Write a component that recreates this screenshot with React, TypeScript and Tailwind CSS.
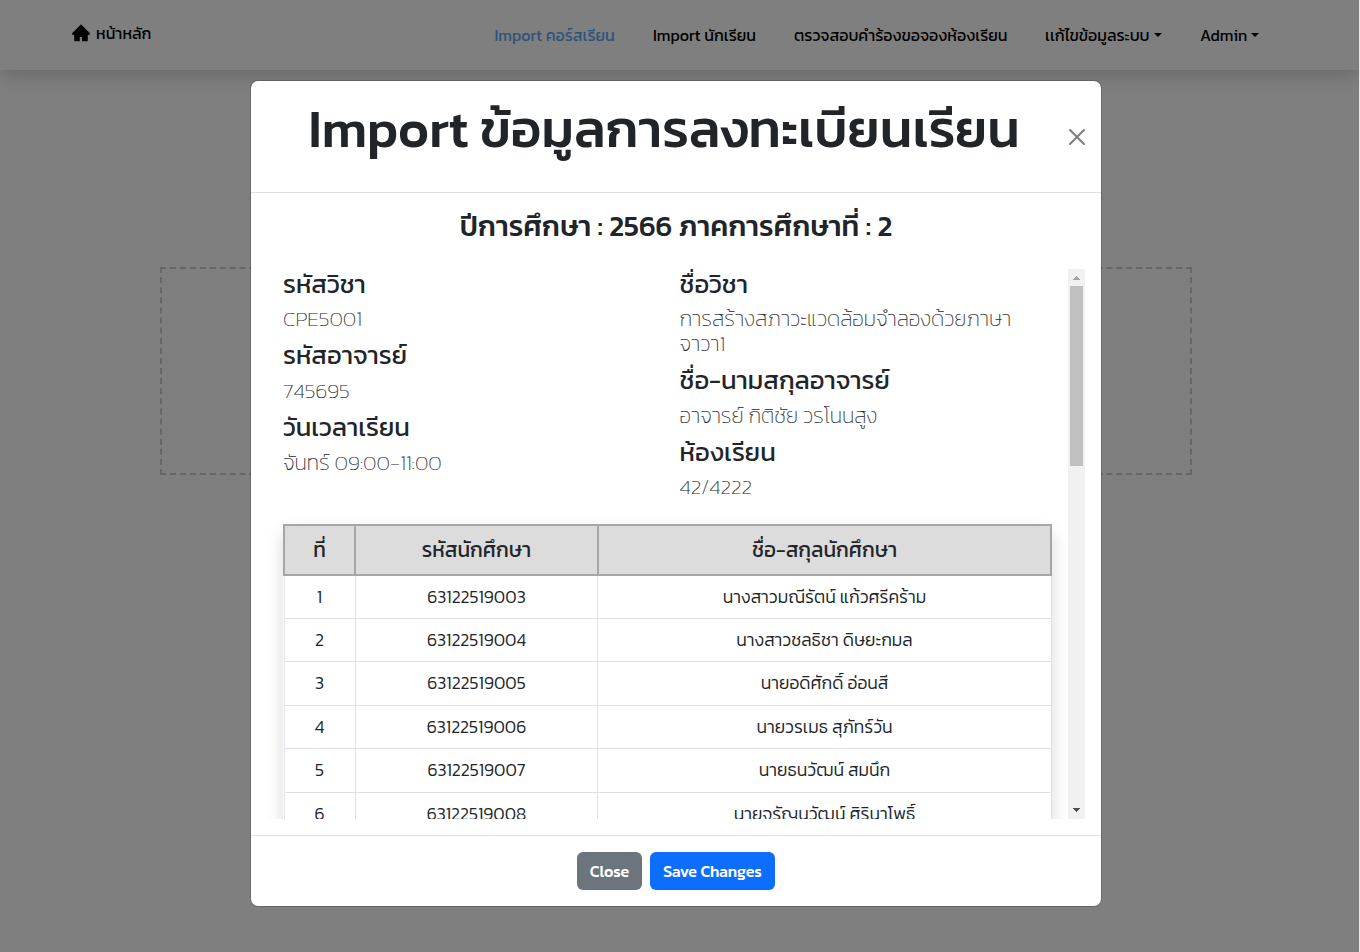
import { AiFillHome } from "react-icons/ai";

function Caret() {
  return <span className="ml-[5px] h-0 w-0 border-x-[4.5px] border-t-[4.5px] border-x-transparent border-t-black" />;
}

function Navbar() {
  return (
    <nav className="flex h-[70px] items-center bg-white pr-[100px] pl-[71px] text-base whitespace-nowrap text-black shadow-[0_8px_16px_rgba(0,0,0,0.15)]">
      <a className="mb-[3px] flex items-center">
        <AiFillHome className="mr-[5px] mb-px h-5 w-5" />
        <span className="mb-[2px]">หน้าหลัก</span>
      </a>
      <div className="ml-auto flex items-center gap-[38px]">
        <span className="w-[120.5px] text-[#5ba6f8]">Import คอร์สเรียน</span>
        <span className="w-[103px]">Import นักเรียน</span>
        <span className="w-[213px]">ตรวจสอบคำร้องขอจองห้องเรียน</span>
        <div className="flex items-center">
          <span className="w-[104px]">เเก้ไขข้อมูลระบบ</span>
          <Caret />
        </div>
        <div className="flex items-center">
          <span className="w-[46px]">Admin</span>
          <Caret />
        </div>
      </div>
    </nav>
  );
}

type Item = { label: string; value: string };

const leftItems: Item[] = [
  { label: "รหัสวิชา", value: "CPE5001" },
  { label: "รหัสอาจารย์", value: "745695" },
  { label: "วันเวลาเรียน", value: "จันทร์ 09:00-11:00" },
];

const rightItems: Item[] = [
  { label: "ชื่อวิชา", value: "การสร้างสภาวะแวดล้อมจำลองด้วยภาษา\nจาวา1" },
  { label: "ชื่อ-นามสกุลอาจารย์", value: "อาจารย์ กิติชัย วรโนนสูง" },
  { label: "ห้องเรียน", value: "42/4222" },
];

function Details({ items }: { items: Item[] }) {
  return (
    <div className="-mt-[0.3px] flex flex-col">
      {items.map((item) => (
        <div key={item.label} className="mb-[8.2px] text-[#212529]">
          <div className="mb-[7.8px] text-[25.6px] leading-[30.72px]">{item.label}</div>
          <div className="text-[21.25px] leading-[24.96px] font-extralight whitespace-pre text-[#212529] [-webkit-text-stroke:0.2px_#212529]">
            {item.value}
          </div>
        </div>
      ))}
    </div>
  );
}

const students = [
  { id: "63122519003", name: "นางสาวมณีรัตน์ แก้วศรีคร้าม", height: "h-[43px]" },
  { id: "63122519004", name: "นางสาวชลธิชา ดิษยะกมล", height: "h-[43px]" },
  { id: "63122519005", name: "นายอดิศักดิ์ อ่อนสี", height: "h-[44px]" },
  { id: "63122519006", name: "นายวรเมธ สุภัทร์วัน", height: "h-[43px]" },
  { id: "63122519007", name: "นายธนวัฒน์ สมนึก", height: "h-[44px]" },
  { id: "63122519008", name: "นายจรัญนวัฒน์ ศิรินาโพธิ์", height: "h-[43px]" },
];

function StudentTable() {
  return (
    <div className="mt-[15.3px] w-[769px] text-[#212529] shadow-[0_8px_16px_rgba(0,0,0,0.15)]">
      <div className="flex h-[52px] border-2 border-[#a6a6a6] bg-[#dcdcdc] text-[20.8px]">
        <div className="flex w-[71px] items-center justify-center border-r-2 border-[#a6a6a6]">ที่</div>
        <div className="flex w-[243px] items-center justify-center border-r-2 border-[#a6a6a6]">รหัสนักศึกษา</div>
        <div className="flex grow items-center justify-center">ชื่อ-สกุลนักศึกษา</div>
      </div>
      <div className="ml-px border-l border-[#dee2e6] bg-white text-[17.6px] font-light">
        {students.map((s, i) => (
          <div key={s.id} className={`flex border-b border-[#dee2e6] ${s.height}`}>
            <div className="flex w-[71px] items-center justify-center border-r border-[#dee2e6] pr-px">{i + 1}</div>
            <div className="flex w-[242px] items-center justify-center border-r border-[#dee2e6]">{s.id}</div>
            <div className="flex grow items-center justify-center border-r border-[#dee2e6]">{s.name}</div>
          </div>
        ))}
      </div>
    </div>
  );
}

function ScrollBar() {
  return (
    <div className="flex w-[17px] shrink-0 flex-col items-center bg-[#f1f1f1]">
      <svg viewBox="0 0 17 17" className="h-[17px] w-[17px]" shapeRendering="crispEdges">
        <path d="M8 7h1v1h1v1h1v1h1v1H5v-1h1v-1h1v-1h1z" fill="#a3a3a3" />
      </svg>
      <div className="h-[180px] w-[13px] bg-[#c1c1c1]" />
      <svg viewBox="0 0 17 17" className="mt-auto h-[17px] w-[17px]" shapeRendering="crispEdges">
        <path d="M5 6h7v1h-1v1h-1v1H9v1H8V9H7V8H6V7H5z" fill="#505050" />
      </svg>
    </div>
  );
}

function Modal() {
  return (
    <div className="flex h-[827px] w-[852px] flex-col overflow-hidden rounded-lg border border-black/[0.175] bg-white bg-clip-padding">
      <div className="flex h-[112px] shrink-0 items-center border-b border-[#dee2e6] pr-4 pl-[57.5px]">
        <h1 className="mb-[16px] text-[52.8px] leading-[64px] font-medium whitespace-nowrap text-[#212529]">
          Import ข้อมูลการลงทะเบียนเรียน
        </h1>
        <svg viewBox="0 0 16 16" className="ml-auto h-4 w-4 opacity-50" fill="#000">
          <path d="M.293.293a1 1 0 0 1 1.414 0L8 6.586 14.293.293a1 1 0 1 1 1.414 1.414L9.414 8l6.293 6.293a1 1 0 0 1-1.414 1.414L8 9.414l-6.293 6.293a1 1 0 0 1-1.414-1.414L6.586 8 .293 1.707a1 1 0 0 1 0-1.414z" />
        </svg>
      </div>
      <div className="flex grow flex-col px-4 pb-4">
        <h2 className="h-[76px] shrink-0 pt-[16px] text-center text-[28.8px] leading-[34.56px] font-medium text-[#212529]">
          ปีการศึกษา : 2566 ภาคการศึกษาที่ : 2
        </h2>
        <div className="flex h-[550px] overflow-hidden">
          <div className="w-[801px] overflow-hidden px-4">
            <div className="grid w-[769px] grid-cols-2 gap-6">
              <Details items={leftItems} />
              <Details items={rightItems} />
            </div>
            <StudentTable />
          </div>
          <ScrollBar />
        </div>
      </div>
      <div className="flex h-[71px] shrink-0 items-center justify-center gap-2 border-t border-[#dee2e6] text-base font-medium tracking-[-0.08px] text-white">
        <button className="flex h-[38px] w-[65px] items-center justify-center rounded-md bg-[#6c757d]">Close</button>
        <button className="flex h-[38px] w-[125px] items-center justify-center rounded-md bg-[#0d6efd] whitespace-nowrap">
          Save Changes
        </button>
      </div>
    </div>
  );
}

export default function App() {
  return (
    <div className="relative h-[952px] w-full overflow-hidden bg-[#e4e8f3] font-['Kanit',sans-serif]">
      <div className="h-full w-[1359px] overflow-hidden bg-white">
        <Navbar />
        <div className="mt-[197px] ml-[160px] h-[208px] w-[1032px] border-2 border-dashed border-[#cccccc]" />
      </div>
      <div className="absolute inset-y-0 left-0 flex w-[1359px] items-start bg-black/50 pt-[80px] pl-[250px]">
        <Modal />
      </div>
    </div>
  );
}
